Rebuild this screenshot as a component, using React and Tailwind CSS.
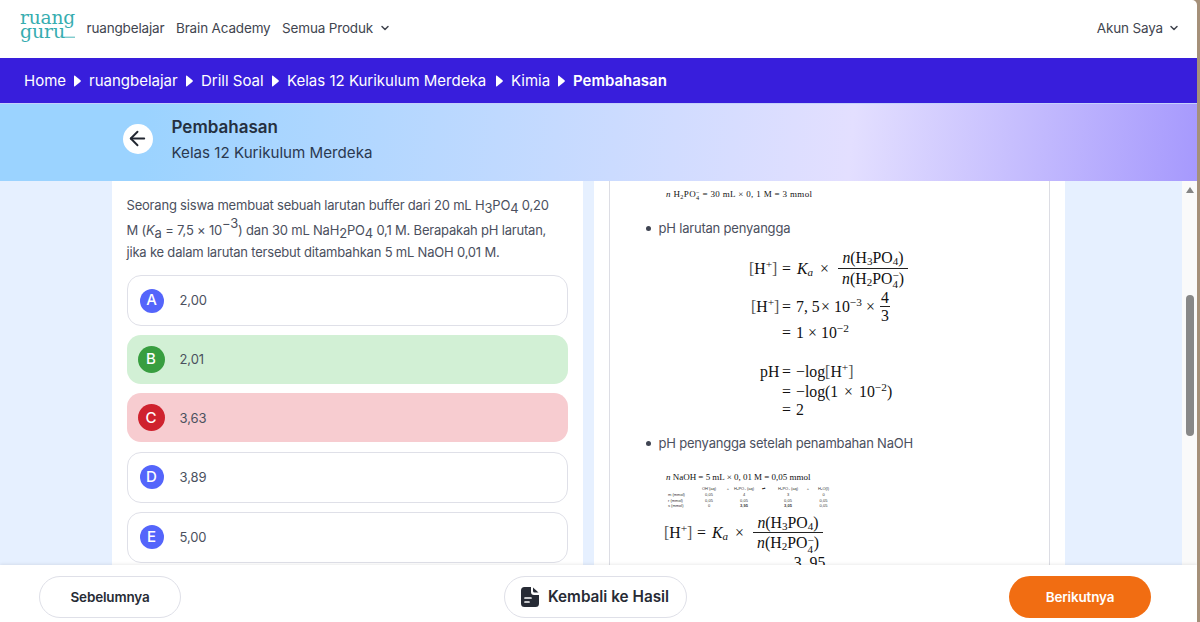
import React from 'react';
import { ChevronDown, ArrowLeft } from 'lucide-react';

const crumbs = ['Home', 'ruangbelajar', 'Drill Soal', 'Kelas 12 Kurikulum Merdeka', 'Kimia'];
const crumbWidths = ['w-[42px]', 'w-[89px]', 'w-[63px]', 'w-[201px]', 'w-[39px]'];

const options = [
    { letter: 'A', value: '2,00', status: 'default' },
    { letter: 'B', value: '2,01', status: 'correct' },
    { letter: 'C', value: '3,63', status: 'wrong' },
    { letter: 'D', value: '3,89', status: 'default' },
    { letter: 'E', value: '5,00', status: 'default' },
];

const optionStyles = {
    default: {
        box: 'h-[51px] border border-[#dfe0e8] pl-[12px]',
        badge: 'h-[24px] w-[24px] bg-[#5465fb] mr-[16px]',
    },
    correct: {
        box: 'h-[49px] bg-[#d2f0d5] pl-[11px]',
        badge: 'h-[27px] w-[27px] bg-[#389e40] mr-[15px]',
    },
    wrong: {
        box: 'h-[49px] bg-[#f7ccd0] pl-[11px]',
        badge: 'h-[27px] w-[27px] bg-[#cf222e] mr-[15px]',
    },
};

const reactionRows = [
    ['m (mmol)', '0,05', '', '4', '', '3', '', '0'],
    ['r (mmol)', '0,05', '', '0,05', '', '0,05', '', '0,05'],
    ['s (mmol)', '0', '', '3,95', '', '3,05', '', '0,05'],
];

const Logo = () => (
    <svg width="56" height="36" viewBox="0 0 56 36" fill="#36adb0" fontFamily="DejaVu Serif" fontSize="19" overflow="visible">
        <text x="0" y="14" textLength="55" lengthAdjust="spacingAndGlyphs">ruang</text>
        <text x="0" y="27.5" textLength="45" lengthAdjust="spacingAndGlyphs">guru</text>
        <path d="M43 27.2h12" stroke="#36adb0" strokeWidth="0.9" />
    </svg>
);

const Option = ({ letter, value, status }) => {
    const style = optionStyles[status];
    return (
        <div className={`flex shrink-0 items-center rounded-[14px] ${style.box}`}>
            <span className={`flex items-center justify-center rounded-full text-[15px] font-medium text-white ${style.badge}`}>
                {letter}
            </span>
            <span className="pt-[1px] text-[13px] tracking-[-0.1px] text-[#4b505e]">{value}</span>
        </div>
    );
};

const Sub = ({ children }) => <sub className="bottom-[-0.2em] text-[70%]">{children}</sub>;
const Sup = ({ children }) => <sup className="top-[-0.5em] text-[72%]">{children}</sup>;

// Phosphate ion with charge stacked over the subscript
const Dihydrogen = () => (
    <>
        H<Sub>2</Sub>PO
        <span className="inline-flex flex-col align-middle text-[70%] leading-[0.8]">
            <span>−</span>
            <span>4</span>
        </span>
    </>
);

const Hydrogen = () => (
    <>
        <span className="text-[#555]">[</span>H<Sup>+</Sup><span className="text-[#555]">]</span>
    </>
);

const Fraction = ({ top, bottom, className, cell = 'h-[20px]' }) => (
    <span className={`flex flex-col items-center ${className}`}>
        <span className={`flex items-center self-stretch justify-center border-b border-[#222] ${cell}`}>
            <span>{top}</span>
        </span>
        <span className={`flex items-center ${cell}`}>
            <span>{bottom}</span>
        </span>
    </span>
);

const KaRow = ({ className }) => (
    <div className={`flex items-center ${className}`}>
        <span className="w-[33px]"><Hydrogen /></span>
        <span className="w-[15px]">=</span>
        <span className="w-[23px]"><i>K<Sub>a</Sub></i></span>
        <span className="w-[18px]">×</span>
        <Fraction
            className="w-[70px]"
            top={<><i>n</i>(H<Sub>3</Sub>PO<Sub>4</Sub>)</>}
            bottom={<><i>n</i>(<Dihydrogen />)</>}
        />
    </div>
);

const Bullet = ({ children, className }) => (
    <div className={`flex items-center gap-[8px] pl-[35.5px] font-[Inter] text-[13px] tracking-[-0.2px] text-[#4b505e] ${className}`}>
        <span className="h-[5px] w-[5px] rounded-full bg-[#3f4452]" />
        <span>{children}</span>
    </div>
);

const Explanation = () => (
    <div className="h-full w-[441px] overflow-hidden border-x border-[#dcdde4] font-['Liberation_Serif'] text-[15.8px] whitespace-nowrap text-[#111]">
        <div className="flex h-[26px] items-center pt-[2px] pl-[56px] text-[9px]">
            <span className="tracking-[0.34px]">
                <i>n</i> <Dihydrogen /> = 30 mL × 0, 1 M = 3 mmol
            </span>
        </div>
        <Bullet className="h-[43px]">pH larutan penyangga</Bullet>
        <KaRow className="h-[37px] pl-[139px]" />
        <div className="flex h-[40px] items-center pl-[141px]">
            <span className="w-[31px]"><Hydrogen /></span>
            <span className="w-[14px]">=</span>
            <span className="w-[25px]">7, 5</span>
            <span className="w-[13px]">×</span>
            <span className="w-[32px]">10<Sup>−3</Sup></span>
            <span className="w-[14px]">×</span>
            <Fraction className="w-[10px] leading-none" top="4" bottom="3" cell="h-[18px]" />
        </div>
        <div className="flex h-[12px] items-center pl-[172px]">
            <span className="w-[14px]">=</span>
            <span className="w-[12px]">1</span>
            <span className="w-[13px]">×</span>
            <span>10<Sup>−2</Sup></span>
        </div>
        <div className="mt-[23px] flex h-[20px] items-center pl-[150px]">
            <span className="w-[22px]">pH</span>
            <span className="w-[14px]">=</span>
            <span>−log<Hydrogen /></span>
        </div>
        <div className="flex h-[20px] items-center pl-[172px]">
            <span className="w-[14px]">=</span>
            <span className="w-[48px]">−log(1</span>
            <span className="w-[15px]">×</span>
            <span>10<Sup>−2</Sup>)</span>
        </div>
        <div className="flex h-[16px] items-center pl-[172px]">
            <span className="w-[14px]">=</span>
            <span>2</span>
        </div>
        <Bullet className="mt-[15px] h-[20px] pt-px">pH penyangga setelah penambahan NaOH</Bullet>
        <div className="mt-[16px] flex h-[16px] items-center pt-[2px] pl-[56px] text-[9px]">
            <span className="tracking-[-0.02px]">
                <i>n</i> NaOH = 5 mL × 0, 01 M = 0,05 mmol
            </span>
        </div>
        <div className="mt-px ml-[58px] grid w-[163px] grid-cols-[32px_18px_20px_12px_26px_24px_16px_15px] font-['Liberation_Sans'] text-[4px] leading-[5.75px] text-[#333]">
            <span />
            <span className="text-center">OH⁻(aq)</span>
            <span className="text-center">+</span>
            <span className="flex justify-center">H₃PO₄ (aq)</span>
            <span className="text-center">⇌</span>
            <span className="text-center">H₂PO₄ (aq)</span>
            <span className="text-center">+</span>
            <span className="text-center">H₂O(l)</span>
            {reactionRows.map((row) =>
                row.map((cell, i) => (
                    <span
                        key={`${row[0]}-${i}`}
                        className={`${i === 0 ? '' : 'text-center'} ${cell === '3,95' || cell === '3,05' ? 'font-bold' : ''}`}
                    >
                        {cell}
                    </span>
                ))
            )}
        </div>
        <KaRow className="mt-[4px] h-[40px] pl-[54px]" />
        <div className="flex h-[40px] items-center pl-[57px]">
            <span className="w-[30px]"><Hydrogen /></span>
            <span className="w-[14px]">=</span>
            <span className="w-[25px]">7, 5</span>
            <span className="w-[13px]">×</span>
            <span className="w-[31px]">10<Sup>−3</Sup></span>
            <span className="w-[15px]">×</span>
            <Fraction className="w-[29px]" top="3, 95" bottom="3, 05" />
        </div>
    </div>
);

const App = () => {
    return (
        <div className="flex h-[622px] w-[1200px] overflow-hidden bg-[#a59079] font-[Inter]">
            <div className="flex w-[1197px] flex-col overflow-hidden rounded-tr-[5px] bg-white">
                <header className="flex h-[58px] shrink-0 items-center pr-[17px] pb-[2px] pl-[20px] text-[13.5px] tracking-[-0.16px] text-[#41454f]">
                    <div className="w-[66.5px]"><Logo /></div>
                    <span className="w-[89.5px]">ruangbelajar</span>
                    <span className="w-[106px]">Brain Academy</span>
                    <span className="w-[96.5px]">Semua Produk</span>
                    <ChevronDown size={12} strokeWidth={3} />
                    <span className="mr-[5px] ml-auto">Akun Saya</span>
                    <ChevronDown size={12} strokeWidth={3} />
                </header>

                <nav className="flex h-[45px] shrink-0 items-center bg-[#381edc] pt-px pl-[24px] text-[15px] whitespace-nowrap text-white">
                    {crumbs.map((crumb, i) => (
                        <React.Fragment key={crumb}>
                            <span className={crumbWidths[i]}>{crumb}</span>
                            <svg className="mr-[8px] ml-[8px]" width="7" height="12" viewBox="0 0 7 12" fill="white">
                                <path d="M0 1.2Q0 0 1 .7L6.5 5.3Q7.2 6 6.5 6.7L1 11.3Q0 12 0 10.8Z" />
                            </svg>
                        </React.Fragment>
                    ))}
                    <span className="font-semibold">Pembahasan</span>
                </nav>

                <div className="flex h-[78px] shrink-0 items-center border-t border-[#c4d0fb] bg-[linear-gradient(95deg,#9bd3ff_0%,#9bd3ff_12%,#e3dfff_71%,#a699fd_100%)] pl-[122.5px]">
                    <button className="mt-[-8px] flex h-[30px] w-[30px] items-center justify-center rounded-full bg-white text-[#222731]">
                        <ArrowLeft size={23} strokeWidth={2} />
                    </button>
                    <div className="mt-[-6px] ml-[19px] text-[#2b3950]">
                        <h1 className="text-[17px] leading-[25px] font-semibold text-[#25303f]">Pembahasan</h1>
                        <p className="text-[15.15px] leading-[25px]">Kelas 12 Kurikulum Merdeka</p>
                    </div>
                </div>

                <main className="flex h-[384px] shrink-0 overflow-hidden bg-[#e6f0ff] pl-[112px]">
                    <section className="flex w-[471px] flex-col overflow-hidden bg-white pt-[12px] pr-[15px] pl-[14.5px]">
                        <div className="mb-[11.5px] text-[13px] tracking-[-0.2px] whitespace-nowrap text-[#4b505e]">
                            <p className="h-[24.5px] leading-[24px]">
                                Seorang siswa membuat sebuah larutan buffer dari 20 mL H<sub className="text-[13px]">3</sub>PO<sub className="text-[13px]">4</sub> 0,20
                            </p>
                            <p className="h-[23px] leading-[25px]">
                                M (<i>K</i><sub className="text-[13px]">a</sub> = 7,5 × 10<sup className="text-[13px]">−3</sup>) dan 30 mL NaH<sub className="text-[13px]">2</sub>PO<sub className="text-[13px]">4</sub> 0,1 M. Berapakah pH larutan,
                            </p>
                            <p className="h-[23px] leading-[23px]">jika ke dalam larutan tersebut ditambahkan 5 mL NaOH 0,01 M.</p>
                        </div>
                        <div className="flex flex-col gap-[9.2px]">
                            {options.map((option) => (
                                <Option key={option.letter} {...option} />
                            ))}
                        </div>
                    </section>
                    <section className="ml-[11px] w-[471px] bg-white pl-[15px]">
                        <Explanation />
                    </section>
                    <div className="ml-auto flex w-[15px] flex-col items-center bg-[#fafafa] pt-[6px]">
                        <svg width="8" height="6" viewBox="0 0 8 6" fill="#858585">
                            <path d="M4 0L8 6H0Z" />
                        </svg>
                        <div className="mt-[102px] h-[141px] w-[8px] rounded-full bg-[#888888]" />
                    </div>
                </main>

                <footer className="z-10 flex h-[57px] shrink-0 items-center justify-between bg-white pt-[7px] pr-[46px] pl-[39px] text-[13.5px] font-semibold text-[#272b35] shadow-[0_-1px_3px_rgba(0,0,0,0.08)]">
                    <button className="h-[42px] w-[142px] rounded-full border border-[#dfe0e8] tracking-[-0.17px]">Sebelumnya</button>
                    <button className="flex h-[42px] w-[183px] items-center justify-center gap-[9px] rounded-full border border-[#dfe0e8] text-[15.3px]">
                        <svg width="18" height="20" viewBox="0 0 18 20" fill="#272b35">
                            <path d="M3.5 0H10V5Q10 8 13 8H18V16.5Q18 20 14.5 20H3.5Q0 20 0 16.5V3.5Q0 0 3.5 0Z" />
                            <path d="M12 0.5L17.5 5.5H13.5Q12 5.5 12 4Z" />
                            <path d="M4 11H10M4 15H8" stroke="white" strokeWidth="1.7" strokeLinecap="round" />
                        </svg>
                        Kembali ke Hasil
                    </button>
                    <button className="h-[42px] w-[142px] rounded-full bg-[#f16d12] tracking-[-0.17px] text-white">Berikutnya</button>
                </footer>
            </div>
        </div>
    );
};

export default App;
